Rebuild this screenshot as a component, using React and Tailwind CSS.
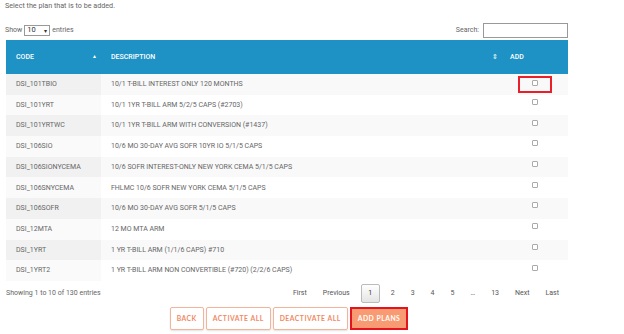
import React from 'react';

const plans = [
  { code: 'DSI_101TBIO', description: '10/1 T-BILL INTEREST ONLY 120 MONTHS' },
  { code: 'DSI_101YRT', description: '10/1 1YR T-BILL ARM 5/2/5 CAPS (#2703)' },
  { code: 'DSI_101YRTWC', description: '10/1 1YR T-BILL ARM WITH CONVERSION (#1437)' },
  { code: 'DSI_106SIO', description: '10/6 MO 30-DAY AVG SOFR 10YR IO 5/1/5 CAPS' },
  { code: 'DSI_106SIONYCEMA', description: '10/6 SOFR INTEREST-ONLY NEW YORK CEMA 5/1/5 CAPS' },
  { code: 'DSI_106SNYCEMA', description: 'FHLMC 10/6 SOFR NEW YORK CEMA 5/1/5 CAPS' },
  { code: 'DSI_106SOFR', description: '10/6 MO 30-DAY AVG SOFR 5/1/5 CAPS' },
  { code: 'DSI_12MTA', description: '12 MO MTA ARM' },
  { code: 'DSI_1YRT', description: '1 YR T-BILL ARM (1/1/6 CAPS) #710' },
  { code: 'DSI_1YRT2', description: '1 YR T-BILL ARM NON CONVERTIBLE (#720) (2/2/6 CAPS)' },
];

const pages = ['1', '2', '3', '4', '5', '…', '13'];

const App = () => {
  return (
    <div className="w-[624px] h-[334px] bg-white font-['Roboto',sans-serif] text-[#666] overflow-hidden">
      <p className="px-[5px] pt-[1px] text-[7.2px] leading-[10px]">Select the plan that is to be added.</p>

      {/* Length + search */}
      <div className="flex items-center justify-between pl-[5px] pr-[56px] mt-[11px] h-[16px] text-[7px]">
        <div className="flex items-center gap-[2px]">
          <span>Show</span>
          <div className="flex items-center h-[11px] w-[26px] border border-[#999] px-[2px] text-[7.5px] text-[#333] justify-between">
            <span>10</span>
            <span className="text-[6px]">▾</span>
          </div>
          <span>entries</span>
        </div>
        <div className="flex items-center gap-[4px]">
          <span>Search:</span>
          <div className="w-[85px] h-[15px] border border-[#999]" />
        </div>
      </div>

      {/* Table */}
      <table className="ml-[6px] mt-[2px] w-[562px] border-collapse table-fixed text-[7px]">
        <thead>
          <tr className="bg-[#1e92c4] text-white h-[34px]">
            <th className="w-[95px] text-left pl-[10px] pr-[4px] font-medium">
              <div className="flex justify-between items-center">
                <span>CODE</span>
                <span className="text-[5px]">▲</span>
              </div>
            </th>
            <th className="text-left pl-[10px] pr-[4px] font-medium">
              <div className="flex justify-between items-center">
                <span>DESCRIPTION</span>
                <span className="text-[7px] leading-none">⇕</span>
              </div>
            </th>
            <th className="w-[66px] text-left pl-[8px] font-medium">ADD</th>
          </tr>
        </thead>
        <tbody>
          {plans.map((plan, i) => (
            <tr key={plan.code} className={`h-[20.7px] ${i % 2 === 0 ? 'bg-[#f9f9f9]' : 'bg-white'}`}>
              <td className={`pl-[10px] ${i % 2 === 0 ? 'bg-[#f1f1f1]' : 'bg-[#fafafa]'}`}>{plan.code}</td>
              <td className="pl-[10px]">{plan.description}</td>
              <td className="text-center">
                {i === 0 ? (
                  <div className="ml-[16px] w-[34px] h-[17px] border-2 border-[#e8202a] flex items-start justify-center pt-[2px]">
                    <div className="w-[6px] h-[6px] border border-[#aaa] rounded-[1px] bg-white" />
                  </div>
                ) : (
                  <div className="mx-auto w-[6px] h-[6px] border border-[#aaa] rounded-[1px] bg-white -mt-[6px]" />
                )}
              </td>
            </tr>
          ))}
        </tbody>
      </table>

      {/* Info + pagination */}
      <div className="flex items-center justify-between pl-[6px] pr-[57px] mt-[2px] h-[21px] text-[7px]">
        <span>Showing 1 to 10 of 130 entries</span>
        <div className="flex items-center text-[#555]">
          <span className="pl-[5px] pr-[8px]">First</span>
          <span className="px-[8px]">Previous</span>
          {pages.map((p) =>
            p === '1' ? (
              <span key={p} className="mx-[3px] w-[19px] h-[19px] flex items-center justify-center border border-[#bbb] rounded-[2px] bg-gradient-to-b from-white to-[#e4e4e4] text-[#333]">
                1
              </span>
            ) : (
              <span key={p} className="px-[8px]">{p}</span>
            )
          )}
          <span className="px-[8px]">Next</span>
          <span className="px-[8px]">Last</span>
        </div>
      </div>

      {/* Action buttons */}
      <div className="ml-[8px] w-[562px] flex justify-center gap-[2px] mt-[3px] text-[6.8px] font-bold tracking-[0.5px] font-['Lato',sans-serif]">
        <button className="h-[23px] px-[6px] border border-[#f4b49a] rounded-[2px] text-[#ef8a63] bg-white shadow-[0_1px_2px_rgba(0,0,0,0.12)]">BACK</button>
        <button className="h-[23px] px-[6px] border border-[#f4b49a] rounded-[2px] text-[#ef8a63] bg-white shadow-[0_1px_2px_rgba(0,0,0,0.12)]">ACTIVATE ALL</button>
        <button className="h-[23px] px-[6px] border border-[#f4b49a] rounded-[2px] text-[#ef8a63] bg-white shadow-[0_1px_2px_rgba(0,0,0,0.12)]">DEACTIVATE ALL</button>
        <button className="h-[23px] px-[6px] border-2 border-[#e3141d] text-white bg-[#f99b72]">ADD PLANS</button>
      </div>
    </div>
  );
};

export default App;
